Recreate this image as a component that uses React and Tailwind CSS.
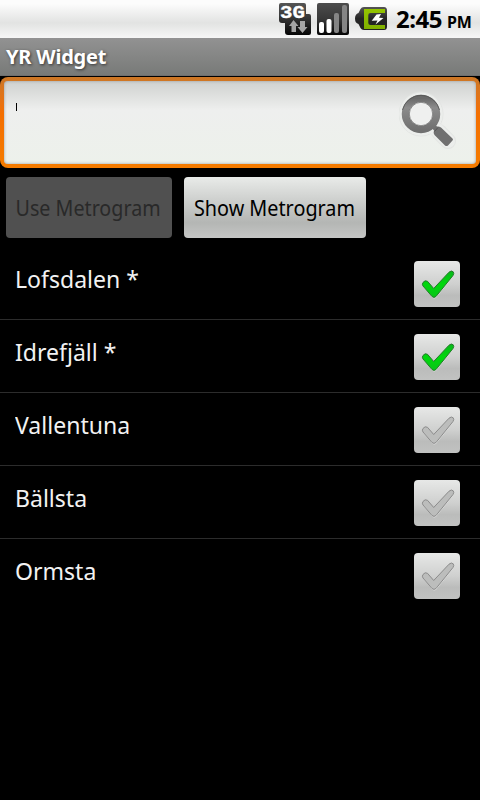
const places = [
  { name: 'Lofsdalen *', checked: true },
  { name: 'Idrefjäll *', checked: true },
  { name: 'Vallentuna', checked: false },
  { name: 'Bällsta', checked: false },
  { name: 'Ormsta', checked: false },
];

function NetworkIcon() {
  return (
    <svg width="32" height="33" viewBox="0 0 32 33">
      <defs>
        <linearGradient id="netBg" x1="0" y1="0" x2="0" y2="1">
          <stop offset="0" stopColor="#555" />
          <stop offset="0.5" stopColor="#333" />
          <stop offset="1" stopColor="#050505" />
        </linearGradient>
      </defs>
      <path
        d="M2 0H25Q27 0 27 2V11H30Q32 11 32 13V30Q32 32 30 32H9Q6 32 6 29V20H3Q0 20 0 17V2Q0 0 2 0Z"
        fill="url(#netBg)"
      />
      <text
        x="1"
        y="15"
        textLength="25"
        lengthAdjust="spacingAndGlyphs"
        fill="#fff"
        stroke="#fff"
        strokeWidth="0.3"
        className="font-['Liberation_Mono'] text-[19px] font-bold"
      >
        3G
      </text>
      <path d="M14.500 17L19.500 23H17V29H12.500V23H10ZM23.500 30L18.500 24H21V18H26V24H28.500Z" fill="#a6a6a6" />
    </svg>
  );
}

function SignalIcon() {
  return (
    <svg width="32" height="33" viewBox="0 0 32 33">
      <defs>
        <linearGradient id="sigBg" x1="0" y1="0" x2="0" y2="1">
          <stop offset="0" stopColor="#4d4d4d" />
          <stop offset="0.5" stopColor="#383838" />
          <stop offset="1" stopColor="#050505" />
        </linearGradient>
      </defs>
      <rect width="32" height="32" rx="2" fill="url(#sigBg)" />
      <rect x="2" y="19" width="5" height="11" rx="2" fill="#fff" />
      <rect x="9.500" y="16" width="5" height="14" rx="2" fill="#fff" />
      <rect x="17" y="10" width="5" height="20" rx="2" fill="#858585" />
      <rect x="25" y="2" width="5" height="28" rx="2" fill="#858585" />
    </svg>
  );
}

function BatteryIcon() {
  return (
    <svg width="33" height="26" viewBox="0 0 33 26">
      <defs>
        <linearGradient id="batBg" x1="0" y1="0" x2="0" y2="1">
          <stop offset="0" stopColor="#555" />
          <stop offset="0.5" stopColor="#252525" />
          <stop offset="1" stopColor="#222" />
        </linearGradient>
        <linearGradient id="batFill" x1="0" y1="0" x2="0" y2="1">
          <stop offset="0" stopColor="#94c500" />
          <stop offset="1" stopColor="#80b000" />
        </linearGradient>
      </defs>
      <path
        d="M9 1H29Q32 1 32 4.500V20.500Q32 24 29 24H9Q6.500 24 5.500 22L3.500 18Q0 17 0 12.500Q0 8 3.500 7L5.500 3Q6.500 1 9 1Z"
        fill="url(#batBg)"
      />
      <path d="M9 3H30V7H15.500Q13.300 7 13.300 9V17Q13.300 19 15.500 19H30V23H9Z" fill="url(#batFill)" />
      <path d="M21.500 8.500L26 8L24 11.800L28.500 12L20.500 18.500L22.500 14.500L16.700 14.800Z" fill="#fff" />
    </svg>
  );
}

function StatusBar() {
  return (
    <header className="flex h-[38px] items-start bg-linear-to-b from-[#fcfcfc] from-10% via-[#e2e3e2] via-60% to-[#f6f6f6] pl-[279px] pt-[3px] text-black">
      <NetworkIcon />
      <div className="ml-1.5">
        <SignalIcon />
      </div>
      <div className="ml-1.5 mt-[3px]">
        <BatteryIcon />
      </div>
      <div className="ml-2 flex items-baseline font-bold">
        <span className="text-[24px] leading-8 tracking-[-0.5px]">2:45</span>
        <span className="ml-[5px] text-[16px] tracking-[-0.2px]">PM</span>
      </div>
    </header>
  );
}

function SearchIcon() {
  return (
    <svg width="60" height="62" viewBox="0 0 60 62">
      <defs>
        <linearGradient id="lens" x1="0" y1="0" x2="0" y2="1">
          <stop offset="0" stopColor="#6a6a6a" />
          <stop offset="0.3" stopColor="#8c8c8c" />
          <stop offset="1" stopColor="#707070" />
        </linearGradient>
      </defs>
      <g fill="none" stroke="#e3e5e3">
        <circle cx="22" cy="23" r="22" />
        <path d="M40 41L49 50" strokeWidth="16" strokeLinecap="round" />
        <path d="M38 39L49 50" stroke="#eceeec" strokeWidth="14" strokeLinecap="round" />
      </g>
      <circle cx="22" cy="23" r="21.500" fill="#eceeec" />
      <path d="M32 36L35 33L38 35.500Q40 35 42 36.500L53.500 47.500Q54.500 48.500 53.500 49.500L49 54.500Q47.500 55.500 46 54.500L35.500 44Q34 42 35 39.500Z" fill="#707070" />
      <path d="M35.500 40.500L39 36.500" stroke="#555" />
      <circle cx="22" cy="23" r="15.500" fill="none" stroke="url(#lens)" strokeWidth="7.500" />
      <circle cx="22" cy="23" r="11.700" fill="#eff0ef" stroke="#606060" strokeWidth="0.7" />
      <path d="M3.500 19A19 19 0 0 1 40.500 19" fill="none" stroke="#555" strokeWidth="0.8" />
    </svg>
  );
}

const CHECK_PATH =
  'M9 21.500Q11 18.700 13.500 20.300L19.700 27.500L35 11.200Q37.500 9 39.200 10.800Q40.400 12.300 39 14.500L22 35.500Q20 37.300 18 35.500L9 25Q7.700 23.200 9 21.500Z';

function CheckBox({ checked }) {
  return (
    <svg width="46" height="46" viewBox="0 0 46 46" role="checkbox" aria-checked={checked}>
      <defs>
        <linearGradient id="boxBg" x1="0" y1="0" x2="0" y2="1">
          <stop offset="0" stopColor="#e7e8e7" />
          <stop offset="0.5" stopColor="#cfd0cf" />
          <stop offset="0.75" stopColor="#bbbcbb" />
          <stop offset="1" stopColor="#c1c2c1" />
        </linearGradient>
        <linearGradient id="tick" x1="0" y1="0" x2="0" y2="1">
          <stop offset="0" stopColor="#08b81a" />
          <stop offset="0.5" stopColor="#00d80c" />
          <stop offset="1" stopColor="#08c418" />
        </linearGradient>
      </defs>
      <rect width="46" height="46" rx="4" fill="url(#boxBg)" />
      <path d={CHECK_PATH} transform="translate(0.3 1)" fill="#dedfde" />
      <path
        d={CHECK_PATH}
        fill={checked ? 'url(#tick)' : '#bcbdbc'}
        stroke={checked ? '#257a2a' : '#8c8c8c'}
        strokeWidth="1"
      />
    </svg>
  );
}

export default function App() {
  return (
    <div className="flex h-[800px] w-[480px] flex-col overflow-hidden bg-black font-['Noto_Sans',sans-serif]">
      <StatusBar />
      <h1 className="h-[38px] border-b border-[#6f6f6f] bg-linear-to-b from-[#929292] to-[#787a78] pl-1.5 text-[20px] leading-[37px] font-bold tracking-[-0.2px] text-white [text-shadow:1px_1px_3px_#333]">
        YR Widget
      </h1>

      <div className="mt-px h-[91px] rounded-lg bg-linear-to-b from-[#cc7725] via-[#f46f00] via-40% to-[#f57c00] p-1">
        <div className="flex h-[83px] justify-between rounded-[4px] bg-linear-to-b from-[#cfd1cf] via-[#eeefee] via-35% to-[#edf1eb] pl-3 pr-[17px] pt-[10px] shadow-[inset_0_0_3px_#999]">
          <div className="mt-3 h-2 w-px bg-black" />
          <SearchIcon />
        </div>
      </div>

      <div className="mt-[9px] flex gap-3 pl-1.5">
        <button
          disabled
          className="flex h-[61px] w-[166px] items-center justify-center rounded-[4px] bg-[#505050] pr-px text-[22px] whitespace-nowrap text-[#292929]"
        >
          <span className="scale-x-[0.895]">Use Metrogram</span>
        </button>
        <button className="flex h-[61px] w-[182px] items-center justify-center rounded-[4px] bg-linear-to-b from-[#e9ebe9] via-[#b4b6b4] via-75% to-[#c5c6c5] pr-0.5 text-[22px] whitespace-nowrap text-black">
          <span className="scale-x-[0.9]">Show Metrogram</span>
        </button>
      </div>

      <ul className="mt-[9px]">
        {places.map((place) => (
          <li
            key={place.name}
            className="flex h-[73px] items-start justify-between border-b border-[#2c2c2c] pl-[15px] pr-5 pt-[14px] last:border-b-0"
          >
            <span className="origin-left scale-x-[0.96] text-[24px] leading-9 text-[#f2f2f2]">{place.name}</span>
            <CheckBox checked={place.checked} />
          </li>
        ))}
      </ul>
    </div>
  );
}
